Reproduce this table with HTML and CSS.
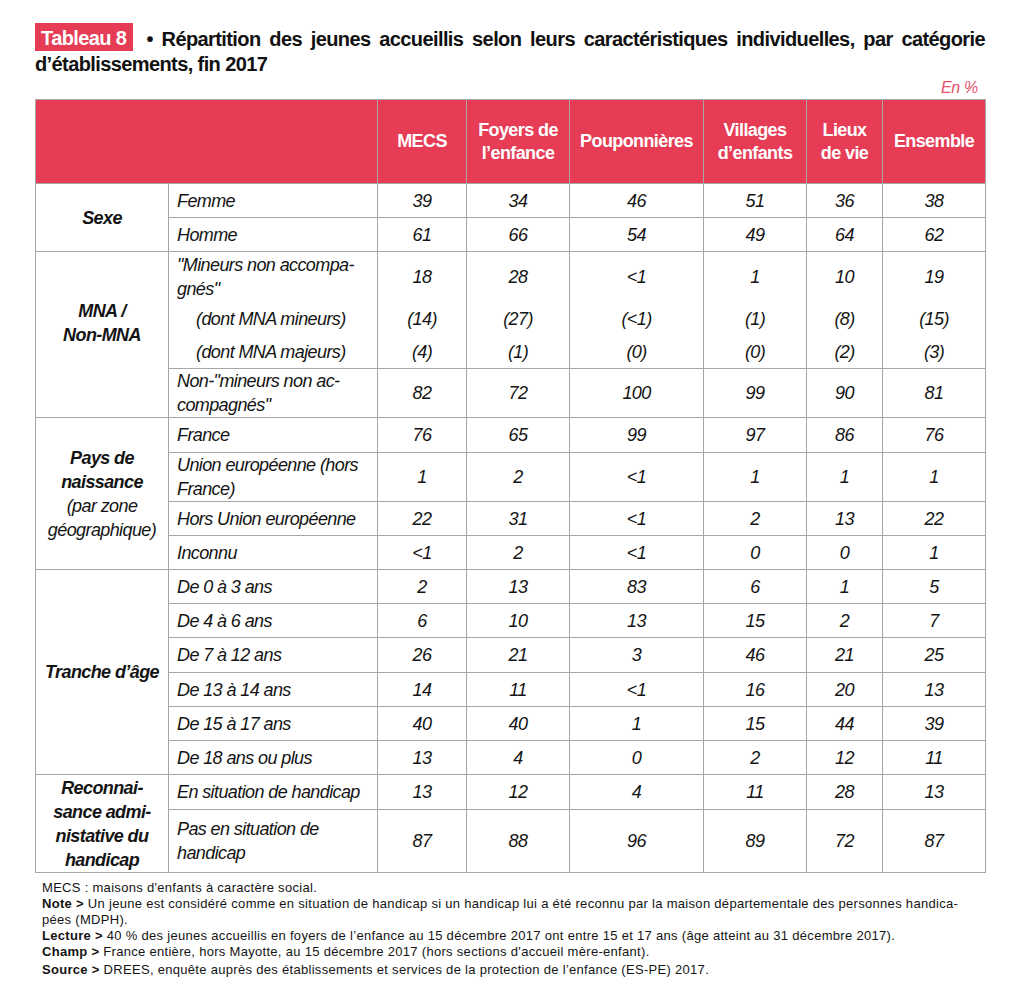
FILE: index.html
```html
<!DOCTYPE html>
<html lang="fr">
<head>
<meta charset="utf-8">
<title>Tableau 8</title>
<link rel="stylesheet" href="styles.css">
</head>
<body>
<div class="page">
  <div class="heading">
    <span class="tag">Tableau 8</span>
    <h1 class="title">• Répartition des jeunes accueillis selon leurs caractéristiques individuelles, par catégorie d’établissements, fin 2017</h1>
  </div>
  <p class="unit">En %</p>
  <table class="data">
    <colgroup>
      <col class="c-cat"><col class="c-lab"><col class="c-mecs"><col class="c-foy"><col class="c-pou"><col class="c-vil"><col class="c-lie"><col class="c-ens">
    </colgroup>
    <thead>
      <tr class="head">
        <th colspan="2"></th>
        <th>MECS</th>
        <th>Foyers de<br>l’enfance</th>
        <th>Pouponnières</th>
        <th>Villages<br>d’enfants</th>
        <th>Lieux<br>de vie</th>
        <th>Ensemble</th>
      </tr>
    </thead>
    <tbody>
      <tr class="r34"><td class="cat" rowspan="2"><b>Sexe</b></td><td class="lab">Femme</td><td>39</td><td>34</td><td>46</td><td>51</td><td>36</td><td>38</td></tr>
      <tr class="r34"><td class="lab">Homme</td><td>61</td><td>66</td><td>54</td><td>49</td><td>64</td><td>62</td></tr>

      <tr class="r50 open-b"><td class="cat cat-mna" rowspan="4"><b>MNA /<br>Non-MNA</b></td><td class="lab">"Mineurs non accompa-<br>gnés"</td><td>18</td><td>28</td><td>&lt;1</td><td>1</td><td>10</td><td>19</td></tr>
      <tr class="r35 open-t open-b"><td class="lab sub">(dont MNA mineurs)</td><td>(14)</td><td>(27)</td><td>(&lt;1)</td><td>(1)</td><td>(8)</td><td>(15)</td></tr>
      <tr class="r32 open-t"><td class="lab sub">(dont MNA majeurs)</td><td>(4)</td><td>(1)</td><td>(0)</td><td>(0)</td><td>(2)</td><td>(3)</td></tr>
      <tr class="r49"><td class="lab">Non-"mineurs non ac-<br>compagnés"</td><td>82</td><td>72</td><td>100</td><td>99</td><td>90</td><td>81</td></tr>

      <tr class="r35"><td class="cat" rowspan="4"><b>Pays de<br>naissance</b><br>(par zone<br>géographique)</td><td class="lab">France</td><td>76</td><td>65</td><td>99</td><td>97</td><td>86</td><td>76</td></tr>
      <tr class="r49"><td class="lab">Union européenne (hors<br>France)</td><td>1</td><td>2</td><td>&lt;1</td><td>1</td><td>1</td><td>1</td></tr>
      <tr class="r34"><td class="lab">Hors Union européenne</td><td>22</td><td>31</td><td>&lt;1</td><td>2</td><td>13</td><td>22</td></tr>
      <tr class="r34"><td class="lab">Inconnu</td><td>&lt;1</td><td>2</td><td>&lt;1</td><td>0</td><td>0</td><td>1</td></tr>

      <tr class="r34"><td class="cat" rowspan="6"><b>Tranche d’âge</b></td><td class="lab">De 0 à 3 ans</td><td>2</td><td>13</td><td>83</td><td>6</td><td>1</td><td>5</td></tr>
      <tr class="r34"><td class="lab">De 4 à 6 ans</td><td>6</td><td>10</td><td>13</td><td>15</td><td>2</td><td>7</td></tr>
      <tr class="r35"><td class="lab">De 7 à 12 ans</td><td>26</td><td>21</td><td>3</td><td>46</td><td>21</td><td>25</td></tr>
      <tr class="r34"><td class="lab">De 13 à 14 ans</td><td>14</td><td>11</td><td>&lt;1</td><td>16</td><td>20</td><td>13</td></tr>
      <tr class="r34"><td class="lab">De 15 à 17 ans</td><td>40</td><td>40</td><td>1</td><td>15</td><td>44</td><td>39</td></tr>
      <tr class="r34"><td class="lab">De 18 ans ou plus</td><td>13</td><td>4</td><td>0</td><td>2</td><td>12</td><td>11</td></tr>

      <tr class="r35"><td class="cat" rowspan="2"><b>Reconnai-<br>sance admi-<br>nistative du<br>handicap</b></td><td class="lab">En situation de handicap</td><td>13</td><td>12</td><td>4</td><td>11</td><td>28</td><td>13</td></tr>
      <tr class="r63"><td class="lab">Pas en situation de<br>handicap</td><td>87</td><td>88</td><td>96</td><td>89</td><td>72</td><td>87</td></tr>
    </tbody>
  </table>
  <div class="notes">
    <p>MECS : maisons d'enfants à caractère social.</p>
    <p><b>Note &gt;</b> Un jeune est considéré comme en situation de handicap si un handicap lui a été reconnu par la maison départementale des personnes handica-<br>pées (MDPH).</p>
    <p><b>Lecture &gt;</b> 40 % des jeunes accueillis en foyers de l’enfance au 15 décembre 2017 ont entre 15 et 17 ans (âge atteint au 31 décembre 2017).</p>
    <p><b>Champ &gt;</b> France entière, hors Mayotte, au 15 décembre 2017 (hors sections d'accueil mère-enfant).</p>
    <p class="src"><b>Source &gt;</b> DREES, enquête auprès des établissements et services de la protection de l’enfance (ES-PE) 2017.</p>
  </div>
</div>
</body>
</html>
```

FILE: styles.css
```css
html, body {
  margin: 0;
  padding: 0;
  background: #ffffff;
}

body {
  color: #141414;
  font-family: "Liberation Sans", Arial, Helvetica, sans-serif;
}

.page {
  width: 950px;
  margin-left: 35px;
  padding-top: 27px;
}

.heading {
  font-size: 20px;
  font-weight: bold;
  line-height: 25px;
  letter-spacing: -0.6px;
}

.tag {
  float: left;
  background: #e63c55;
  color: #ffffff;
  line-height: 22px;
  padding: 4px 7px 2px 6px;
  margin: -4px 13px -2px 0;
}

.title {
  margin: 0;
  font-size: 20px;
  font-weight: bold;
  line-height: 25px;
  text-align: justify;
  color: #111;
}

.unit {
  margin: 1px 0 0 0;
  padding-right: 7px;
  text-align: right;
  font-style: italic;
  font-size: 16px;
  line-height: 19px;
  color: #e8506a;
  letter-spacing: -0.3px;
}

.data {
  margin-top: 2px;
  width: 950px;
  table-layout: fixed;
  border-collapse: collapse;
  font-size: 18px;
  line-height: 24px;
  letter-spacing: -0.6px;
}

.c-cat { width: 133px; }
.c-lab { width: 209px; }
.c-mecs { width: 89px; }
.c-foy { width: 103px; }
.c-pou { width: 134px; }
.c-vil { width: 103px; }
.c-lie { width: 76px; }
.c-ens { width: 103px; }

.data th,
.data td {
  border: 1px solid #a6a6a6;
  padding: 0 4px;
  vertical-align: middle;
}

.data th {
  background: #e63c55;
  color: #ffffff;
  font-weight: bold;
  line-height: 23px;
  text-align: center;
}

.head { height: 84px; }

.data td {
  font-style: italic;
  text-align: center;
}

.data td.lab {
  text-align: left;
  padding-left: 8px;
}

.data td.sub {
  padding-left: 27px;
}

.data td.cat {
  text-align: center;
  padding: 0 2px;
}

.data td.cat-mna {
  padding-bottom: 24px;
}

.open-b td:not(.cat) { border-bottom: none; }
.open-t td:not(.cat) { border-top: none; }

.r32 { height: 32px; }
.r34 { height: 34px; }
.r35 { height: 35px; }
.r49 { height: 49px; }
.r50 { height: 50px; }
.r63 { height: 63px; }

.notes {
  margin-top: 7px;
  padding-left: 7px;
  font-size: 13px;
  line-height: 16px;
  letter-spacing: 0.3px;
  color: #141414;
}

.notes p {
  margin: 0;
}

.notes p.src {
  margin-top: 2px;
}
```
